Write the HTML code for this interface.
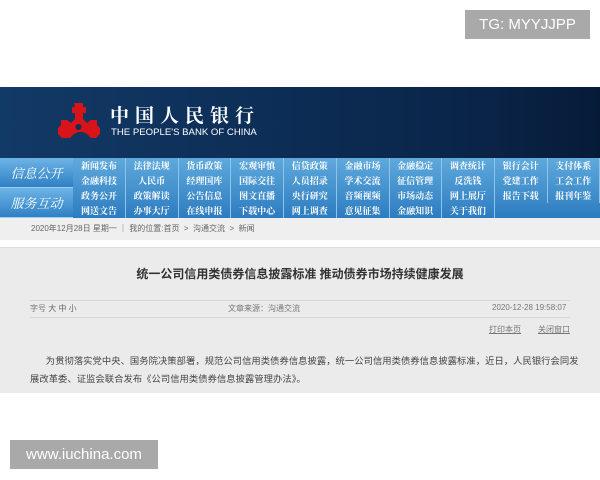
<!DOCTYPE html>
<html><head><meta charset="utf-8"><style>
*{margin:0;padding:0;box-sizing:border-box}
body{width:600px;height:480px;background:#fff;position:relative;overflow:hidden;font-family:"Liberation Sans","Noto Sans CJK SC",sans-serif}
.badge{position:absolute;left:465px;top:10px;width:125px;height:29px;background:#a9a9a9;color:#fff;font-size:15px;line-height:29px;text-align:center}
.wm{position:absolute;left:10px;top:440px;width:148px;height:29px;background:#a9a9a9;color:#fff;font-size:15px;line-height:29px;text-align:center}
.hdr{position:absolute;left:0;top:87px;width:600px;height:71px;background:linear-gradient(90deg,#123a66 0%,#0d2f58 40%,#0a2448 80%,#071b38 100%)}
.t1{position:absolute;left:110px;top:14px;color:#fff;font-size:19px;font-weight:bold;letter-spacing:6px;font-family:"Noto Serif CJK SC",serif}
.t2{position:absolute;left:111px;top:40px;color:#fff;font-size:9.6px}
.nav{position:absolute;left:0;top:158px;width:600px;height:60px;background:linear-gradient(#5fa9dc,#2d7cc0)}
.lab{position:absolute;left:0;width:73px;height:30px;color:#fff;font-style:italic;font-size:13px;line-height:30px;text-align:center;font-family:"Noto Serif CJK SC",serif;background:linear-gradient(#6db4e6,#2f80c4);border-bottom:1px solid #9fd0f0}
.cell{position:absolute;width:53px;height:15px;color:#fff;font-size:9px;font-weight:bold;line-height:15px;text-align:center;border-right:1px solid #8cc4ea;font-family:"Noto Serif CJK SC",serif}
.crumb{position:absolute;left:0;top:218px;width:600px;height:22px;background:#efefef;color:#666;font-size:8px;line-height:22px;padding-left:31px}
.art{position:absolute;left:0;top:247px;width:600px;height:146px;background:#ebebeb;border-top:1px solid #ddd}
.ttl{position:absolute;top:17px;left:0;width:600px;text-align:center;font-size:12px;font-weight:bold;color:#333}
.ln{position:absolute;left:30px;width:540px;height:1px;background:#d6d6d6}
.s{position:absolute;font-size:8px;color:#777}
.p{position:absolute;left:30px;width:560px;font-size:9.3px;letter-spacing:0.05px;color:#444;line-height:18px;white-space:nowrap}
</style></head><body>
<div class="badge">TG: MYYJJPP</div>
<div class="hdr">
<svg style="position:absolute;left:57px;top:16px" width="43" height="42" viewBox="0 0 43 42"><g fill="#d8141a"><path d="M17 0h9v4h3v6h-3v6l4 4 4-3h6v5l3 3v6l-4 4h-5l-4-4-4-2h-5l-4 2-4 4H5l-4-4v-6l3-3v-5h6l4 3 4-4V10h-3V4h3z"/></g><circle cx="21.5" cy="24" r="3" fill="#0d2f58"/></svg>
<div class="t1">中国人民银行</div>
<div class="t2">THE PEOPLE'S BANK OF CHINA</div>
</div>
<div class="nav" id="nav">
<div class="lab" style="top:0">信息公开</div>
<div class="lab" style="top:30px">服务互动</div>
</div>
<div class="crumb">2020年12月28日 星期一 ｜ 我的位置:首页 &nbsp;&gt;&nbsp; 沟通交流 &nbsp;&gt;&nbsp; 新闻</div>
<div class="art">
<div class="ttl">统一公司信用类债券信息披露标准 推动债券市场持续健康发展</div>
<div class="ln" style="top:52px"></div>
<div class="s" style="left:30px;top:55px">字号 <span style="color:#666">大 中 小</span></div>
<div class="s" style="left:228px;top:55px">文章来源：沟通交流</div>
<div class="s" style="left:492px;top:55px">2020-12-28 19:58:07</div>
<div class="ln" style="top:69px"></div>
<div class="s" style="left:489px;top:76px;text-decoration:underline">打印本页</div>
<div class="s" style="left:538px;top:76px;text-decoration:underline">关闭窗口</div>
<div class="p" style="top:104px">&nbsp;&nbsp;&nbsp;&nbsp;&nbsp;&nbsp;为贯彻落实党中央、国务院决策部署，规范公司信用类债券信息披露，统一公司信用类债券信息披露标准，近日，人民银行会同发<br>展改革委、证监会联合发布《公司信用类债券信息披露管理办法》。</div>
</div>
<div class="wm">www.iuchina.com</div>
<script>
var r=[["新闻发布","法律法规","货币政策","宏观审慎","信贷政策","金融市场","金融稳定","调查统计","银行会计","支付体系"],["金融科技","人民币","经理国库","国际交往","人员招录","学术交流","征信管理","反洗钱","党建工作","工会工作"],["政务公开","政策解读","公告信息","图文直播","央行研究","音频视频","市场动态","网上展厅","报告下载","报刊年鉴"],["网送文告","办事大厅","在线申报","下载中心","网上调查","意见征集","金融知识","关于我们"]];
var n=document.getElementById('nav'),h='';
r.forEach(function(a,i){a.forEach(function(t,j){h+='<div class="cell" style="left:'+(73+j*52.7)+'px;top:'+(i*15)+'px">'+t+'</div>'})});
n.insertAdjacentHTML('beforeend',h);
</script>
</body></html>
